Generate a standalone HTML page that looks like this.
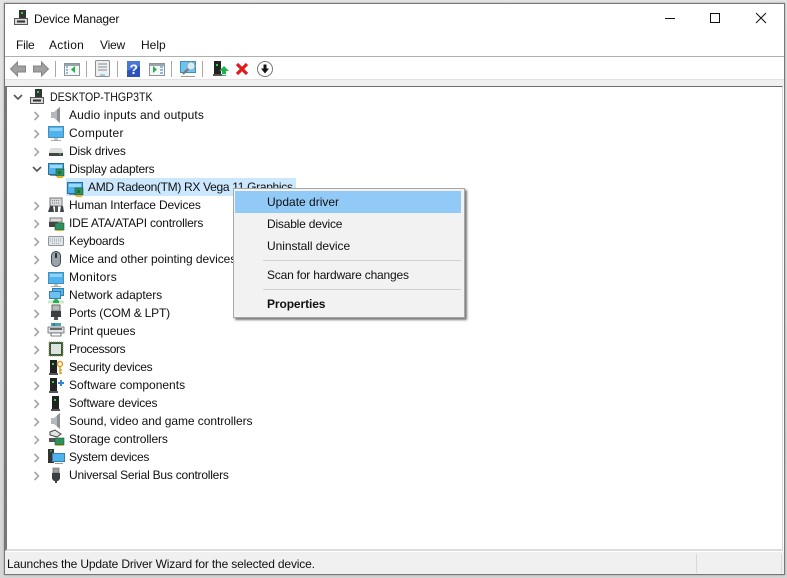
<!DOCTYPE html>
<html><head><meta charset="utf-8"><title>Device Manager</title>
<style>
html,body{margin:0;padding:0}
body{width:787px;height:578px;overflow:hidden;position:relative;background:#d9d9d9;font-family:"Liberation Sans",sans-serif;font-size:12px;color:#101010}
div{position:absolute}
.t{white-space:nowrap;line-height:16px;height:16px}
svg{position:absolute;left:0;top:0}
</style></head><body>
<div style="left:0;top:0;width:787px;height:578px;background:linear-gradient(#e4e4e4,#d6d6d6)"></div>
<div style="left:4px;top:3px;width:779px;height:570px;border:1px solid #777;background:#fff;box-shadow:0 0 2px #999"></div>
<div style="left:5px;top:56px;width:779px;height:1px;background:#b0b0b0"></div>
<div style="left:5px;top:79px;width:779px;height:7px;background:#f0f0f0;border-top:1px solid #e2e2e2;box-sizing:border-box"></div>
<div style="left:5px;top:86px;width:778px;height:465px;background:#fff;border-top:1px solid #6d6d6d;border-left:2px solid #777;border-right:1px solid #d5d5d5;border-bottom:2px solid #dcdcdc;box-sizing:border-box"></div>
<div style="left:5px;top:552px;width:779px;height:22px;background:#f0f0f0"></div>
<div style="left:696px;top:554px;width:1px;height:19px;background:#d8d8d8"></div>
<div style="left:781px;top:554px;width:1px;height:19px;background:#d8d8d8"></div>
<div style="left:66px;top:178px;width:230px;height:18px;background:#cce8ff"></div>

<div class="t" style="left:34px;top:11px;letter-spacing:-.15px">Device Manager</div>
<div class="t" style="left:16px;top:37px;letter-spacing:-.2px">File</div>
<div class="t" style="left:49px;top:37px;letter-spacing:.3px">Action</div>
<div class="t" style="left:100px;top:37px;letter-spacing:-.2px">View</div>
<div class="t" style="left:141px;top:37px">Help</div>

<div class="t" style="left:50px;top:89px;transform:scaleX(.88);transform-origin:0 0">DESKTOP-THGP3TK</div>
<div class="t" style="left:69px;top:107px;letter-spacing:.12px">Audio inputs and outputs</div>
<div class="t" style="left:69px;top:125px;letter-spacing:.25px">Computer</div>
<div class="t" style="left:69px;top:143px;letter-spacing:-.18px">Disk drives</div>
<div class="t" style="left:69px;top:161px;letter-spacing:-.25px">Display adapters</div>
<div class="t" style="left:88px;top:179px;letter-spacing:-.31px">AMD Radeon(TM) RX Vega 11 Graphics</div>
<div class="t" style="left:69px;top:197px;letter-spacing:-.13px">Human Interface Devices</div>
<div class="t" style="left:69px;top:215px;letter-spacing:-.2px">IDE ATA/ATAPI controllers</div>
<div class="t" style="left:69px;top:233px;letter-spacing:-.22px">Keyboards</div>
<div class="t" style="left:69px;top:251px;letter-spacing:-.05px">Mice and other pointing devices</div>
<div class="t" style="left:69px;top:269px;letter-spacing:.25px">Monitors</div>
<div class="t" style="left:69px;top:287px;letter-spacing:-.06px">Network adapters</div>
<div class="t" style="left:69px;top:305px;letter-spacing:-.18px">Ports (COM &amp; LPT)</div>
<div class="t" style="left:69px;top:323px;letter-spacing:-.08px">Print queues</div>
<div class="t" style="left:69px;top:341px;letter-spacing:-.38px">Processors</div>
<div class="t" style="left:69px;top:359px;letter-spacing:-.25px">Security devices</div>
<div class="t" style="left:69px;top:377px">Software components</div>
<div class="t" style="left:69px;top:395px;letter-spacing:-.19px">Software devices</div>
<div class="t" style="left:69px;top:413px;letter-spacing:-.06px">Sound, video and game controllers</div>
<div class="t" style="left:69px;top:431px;letter-spacing:-.1px">Storage controllers</div>
<div class="t" style="left:69px;top:449px;letter-spacing:-.28px">System devices</div>
<div class="t" style="left:69px;top:467px;letter-spacing:-.22px">Universal Serial Bus controllers</div>
<div class="t" style="left:7px;top:556px;letter-spacing:-.155px">Launches the Update Driver Wizard for the selected device.</div>

<svg width="787" height="578" viewBox="0 0 787 578">
<defs>
<symbol id="tower" viewBox="0 0 16 16" overflow="visible"><rect x="5" y="0" width="7" height="13" fill="#222"/><rect x="7" y="3" width="2" height="2" fill="#35d04a"/><path d="M4 13h9v2H4z" fill="#555"/></symbol>
<symbol id="pc" viewBox="0 0 16 16" overflow="visible"><rect x="5" y="0" width="7" height="8" fill="#333"/><rect x="7" y="2" width="2" height="2" fill="#35d04a"/><path d="M.5 8.500h13v6h-13z" fill="#d8d8d8" stroke="#555"/><path d="M3 11.500h8" stroke="#333" stroke-width="2"/></symbol>
<symbol id="mon" viewBox="0 0 16 16" overflow="visible"><rect x=".5" y="1.500" width="15" height="11" fill="#4fb3ef" stroke="#4a8fb8"/><path d="M2 3h12v3H2z" fill="#8fd3f9"/><path d="M6 13h4v2H6z" fill="#c4c4c4"/><path d="M3 15.500h10" stroke="#aaa"/></symbol>
<symbol id="card" viewBox="0 0 16 16" overflow="visible"><rect x=".5" y="1.500" width="15" height="11" fill="#4fb3ef" stroke="#2f6f96"/><path d="M2 3h12v3H2z" fill="#9bd8fa"/><path d="M2 13.500h6" stroke="#888"/><rect x="8" y="7" width="8" height="7" fill="#2f8f5f" stroke="#1d5a3a" stroke-width=".6"/><rect x="10" y="9" width="3" height="3" fill="#173"/><path d="M9 15h6" stroke="#f0b020" stroke-width="2"/></symbol>
<symbol id="spk" viewBox="0 0 16 16" overflow="visible"><path d="M3 5h3l6-5v16l-6-5H3z" fill="#b5b9bc"/><path d="M9 2.500l3-2.500v16l-3-2.500z" fill="#8a9094"/></symbol>
<symbol id="chev" viewBox="0 0 8 10" overflow="visible"><path d="M1.500 1l4 4-4 4" fill="none" stroke="#a6a6a6" stroke-width="1.600"/></symbol>
<symbol id="win" viewBox="0 0 16 16" overflow="visible"><rect x=".5" y="2.500" width="15" height="12" fill="#f6f8f8" stroke="#8a9499"/><path d="M1 3h14v2H1z" fill="#9aa5ab"/></symbol>
</defs>

<!-- window controls -->
<path d="M665 18.500h10" stroke="#111"/>
<rect x="710.500" y="13.500" width="9" height="9" fill="none" stroke="#111"/>
<path d="M756 13l10 10M766 13l-10 10" stroke="#111" fill="none"/>
<use href="#pc" x="14" y="10" width="16" height="16"/>

<!-- toolbar -->
<path d="M10.500 69l7-7v4h8v6h-8v4z" fill="#a0a0a0" stroke="#858585"/>
<path d="M48.500 69l-7-7v4h-8v6h8v4z" fill="#a0a0a0" stroke="#858585"/>
<path d="M55.500 61v16M86.500 61v16M117.500 61v16M171.500 61v16M202.500 61v16" stroke="#a8a8a8"/>
<use href="#win" x="64" y="61" width="16" height="16"/>
<path d="M75 66v7l-4-3.500z" fill="#22b14c"/><path d="M66 67h2M66 70h2M66 73h2" stroke="#2f80c0"/>
<rect x="95.500" y="60.500" width="14" height="16" rx="1" fill="#eef0f0" stroke="#8b8f92"/>
<path d="M98 64h9M98 67h9M98 70h9" stroke="#9aa1a5" stroke-width="1.200"/><path d="M100 75h5" stroke="#4aa8e0"/>
<rect x="127" y="61" width="13" height="16" fill="#2b53b8"/>
<path d="M127 61h13v5l-13 5z" fill="#4b78d8"/>
<text x="129.500" y="74" font-family="Liberation Sans" font-size="14" font-weight="bold" fill="#fff">?</text>
<use href="#win" x="149" y="61" width="16" height="16"/>
<path d="M153 66v7l4-3.500z" fill="#22b14c"/><path d="M160 67h3M160 70h3M160 73h3" stroke="#2f80c0"/>
<rect x="180.500" y="61.500" width="15" height="11" fill="#6fc3f2" stroke="#3d8dbd"/>
<circle cx="191" cy="66" r="4" fill="#d8ecf5" stroke="#8aa"/>
<path d="M188 69l-5 5" stroke="#777" stroke-width="2"/><path d="M181 76.500h14" stroke="#999"/>
<use href="#tower" x="209" y="61" width="16" height="16"/>
<path d="M224 66l5 5h-3v3h-4v-3h-3z" fill="#22b14c"/><path d="M222 75.500h4" stroke="#22b14c"/>
<path d="M237 64l10 10M247 64l-10 10" stroke="#e01b1b" stroke-width="3.200"/>
<circle cx="265" cy="69" r="7.500" fill="#fff" stroke="#777"/>
<path d="M263.500 64.500h3v4h2.500l-4 5-4-5h2.500z" fill="#111"/>

<!-- tree -->
<path d="M14 95l4 4 4-4" fill="none" stroke="#555" stroke-width="1.600"/>
<use href="#pc" x="30" y="89" width="16" height="16"/>
<g id="chevs">
<use href="#chev" x="33" y="111" width="8" height="10"/>
<use href="#chev" x="33" y="129" width="8" height="10"/>
<use href="#chev" x="33" y="147" width="8" height="10"/>
<use href="#chev" x="33" y="201" width="8" height="10"/>
<use href="#chev" x="33" y="219" width="8" height="10"/>
<use href="#chev" x="33" y="237" width="8" height="10"/>
<use href="#chev" x="33" y="255" width="8" height="10"/>
<use href="#chev" x="33" y="273" width="8" height="10"/>
<use href="#chev" x="33" y="291" width="8" height="10"/>
<use href="#chev" x="33" y="309" width="8" height="10"/>
<use href="#chev" x="33" y="327" width="8" height="10"/>
<use href="#chev" x="33" y="345" width="8" height="10"/>
<use href="#chev" x="33" y="363" width="8" height="10"/>
<use href="#chev" x="33" y="381" width="8" height="10"/>
<use href="#chev" x="33" y="399" width="8" height="10"/>
<use href="#chev" x="33" y="417" width="8" height="10"/>
<use href="#chev" x="33" y="435" width="8" height="10"/>
<use href="#chev" x="33" y="453" width="8" height="10"/>
<use href="#chev" x="33" y="471" width="8" height="10"/>
</g>
<path d="M33 167l4 4 4-4" fill="none" stroke="#555" stroke-width="1.600"/>

<use href="#spk" x="48" y="107" width="16" height="16"/>
<use href="#mon" x="48" y="125" width="16" height="16"/>
<path d="M49 151l2-3h10l2 3v4H49z" fill="#ddd"/><path d="M49 153h14v3H49z" fill="#444"/><path d="M59 154h2" stroke="#3d4"/>
<use href="#card" x="48" y="162" width="16" height="16"/>
<use href="#card" x="67" y="181" width="16" height="16"/>
<rect x="50" y="198" width="12" height="8" fill="#d4dadd" stroke="#777"/><path d="M52 200.500h8M52 203h8" stroke="#888" stroke-dasharray="1 1"/>
<path d="M48 212l2-6h3l1 6zM60 212l1-6h2l1 6z" fill="#3c4247"/><rect x="55" y="206" width="3" height="6" fill="#555"/>
<path d="M50 218h12v4H50z" fill="#ddd" stroke="#777"/><path d="M49 222h9v5h-9z" fill="#444"/>
<rect x="55" y="223" width="9" height="7" fill="#2f8f5f" stroke="#1d5a3a" stroke-width=".6"/><path d="M56 230.500h7" stroke="#f0b020"/>
<rect x="48.500" y="236.500" width="15" height="9" rx="1" fill="#e0e5e8" stroke="#8a9499"/><path d="M50 239h12M50 241h12M52 243.500h8" stroke="#9aa4aa" stroke-dasharray="1 1"/>
<rect x="51.500" y="251.500" width="9" height="15" rx="4.500" fill="#9aa4ac" stroke="#3f4a55"/><path d="M56 253v5" stroke="#333" stroke-width="2"/>
<use href="#mon" x="48" y="271" width="16" height="16"/>
<rect x="52.500" y="288.500" width="11" height="7" fill="#4fb3ef" stroke="#3a7ea8"/>
<rect x="49.500" y="291.500" width="11" height="7" fill="#6cc1f2" stroke="#3a7ea8"/>
<path d="M48 302h16" stroke="#cfe8c8" stroke-width="3"/><path d="M56 298l3 3h-6z M53 301h6v2h-6z" fill="#22b14c"/>
<path d="M52 305h8v6h-8z" fill="#bbb" stroke="#666"/><path d="M51 311h10v6H51z" fill="#3a3f44"/><path d="M54 317h4v3h-4z" fill="#555"/>
<path d="M51 323h10v3H51z" fill="#4a9" /><path d="M53 323h2v3h-2z" fill="#37c"/>
<path d="M48 327h16v6H48z" fill="#dfe3e6" stroke="#666" stroke-width=".8"/><path d="M51 333h10v3H51z" fill="#fff" stroke="#555" stroke-width=".8"/><path d="M50 329h12" stroke="#333" stroke-width="1.400"/>
<rect x="49" y="342" width="14" height="14" fill="#2f5d40" stroke="#b89040" stroke-dasharray="1 1"/><rect x="51" y="344" width="10" height="10" fill="#dfe3df"/>
<use href="#tower" x="45" y="360" width="16" height="16"/><circle cx="60" cy="364" r="2.500" fill="none" stroke="#d8a020" stroke-width="1.500"/><path d="M60 366v8M60 370h2M60 373h2" stroke="#d8a020" stroke-width="1.400"/>
<use href="#tower" x="45" y="378" width="16" height="16"/><path d="M58 383h6M61 380v6" stroke="#3388dd" stroke-width="2"/>
<use href="#tower" x="47" y="396" width="16" height="16"/>
<use href="#spk" x="48" y="413" width="16" height="16"/>
<path d="M50 432l5-2 6 4-4 3-7-2z" fill="#e4e4e4" stroke="#444"/><path d="M49 438h8v4h-8z" fill="#555"/>
<rect x="55" y="438" width="9" height="7" fill="#2f8f5f" stroke="#1d5a3a" stroke-width=".6"/><path d="M56 445.500h7" stroke="#f0b020"/>
<rect x="48" y="449" width="6" height="14" fill="#333"/><path d="M50 451h2" stroke="#3d4"/>
<rect x="52.500" y="453.500" width="12" height="8" fill="#4fb3ef" stroke="#3a7ea8"/><path d="M55 463.500h8" stroke="#999"/>
<path d="M53 468h6v5h-6z" fill="#9a9fa3" stroke="#555" stroke-width=".6"/><path d="M52 473h8v6l-2 2h-4l-2-2z" fill="#3a3f44"/><path d="M55 481h2v2h-2z" fill="#444"/>
</svg>

<!-- context menu -->
<div style="left:233px;top:188px;width:230px;height:128px;background:#f2f2f2;border:1px solid #a8a8a8;box-shadow:2px 2px 2px #7a7a7a"></div>
<div style="left:235px;top:191px;width:226px;height:22px;background:#91c9f7"></div>
<div style="left:263px;top:260px;width:198px;height:1px;background:#d0d0d0"></div>
<div style="left:263px;top:289px;width:198px;height:1px;background:#d0d0d0"></div>
<div class="t" style="left:267px;top:194px">Update driver</div>
<div class="t" style="left:267px;top:216px;letter-spacing:-.2px">Disable device</div>
<div class="t" style="left:267px;top:238px;letter-spacing:-.06px">Uninstall device</div>
<div class="t" style="left:267px;top:267px;letter-spacing:-.2px">Scan for hardware changes</div>
<div class="t" style="left:267px;top:296px;font-weight:bold;letter-spacing:-.1px">Properties</div>
</body></html>
